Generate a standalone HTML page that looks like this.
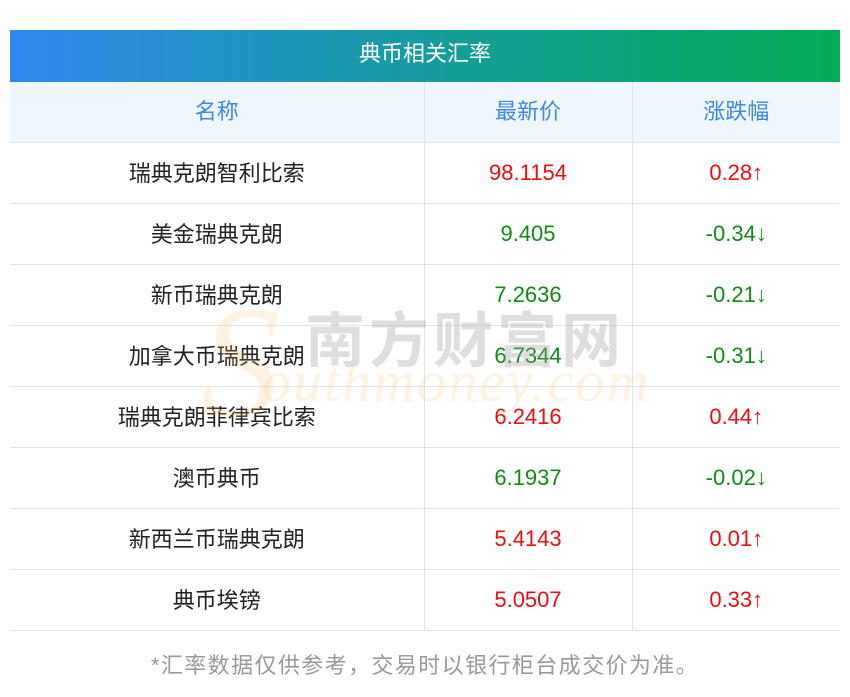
<!DOCTYPE html>
<html><head><meta charset="utf-8"><style>
body{margin:0;width:850px;height:697px;background:#fff;font-family:"Liberation Sans","Noto Sans CJK SC",sans-serif;position:relative;overflow:hidden}
.hd{position:absolute;left:10px;top:30px;width:830px;height:52px;background:linear-gradient(90deg,#2f88ef,#149e98 55%,#04ad55);color:#fff;font-size:22px;text-align:center;line-height:48px}
table{position:absolute;left:10px;top:82px;width:830px;border-collapse:collapse;table-layout:fixed}
td{border:1px solid #dfe3ec;height:61px;text-align:center;font-size:22px;padding:0 0 2px;color:#222;box-sizing:border-box;vertical-align:middle}
tr.h td{height:60px;background:#f0f6fe;color:#3a8ae4;padding-bottom:4px}
tr:first-child td{border-top:none}
td:first-child{border-left:none}td:last-child{border-right:none}
.r,.g{padding-bottom:0}
.r{color:#f20c0c}.g{color:#118a17}
.ft{position:absolute;left:0;width:850px;top:648px;text-align:center;color:#999;font-size:22px;letter-spacing:1.4px}
.wm1{position:absolute;left:305px;top:293px;font-size:60px;color:rgba(160,160,160,.35);letter-spacing:4px;font-family:"Noto Sans CJK SC",sans-serif;font-weight:bold;white-space:nowrap}
.wm2{position:absolute;left:262px;top:348px;font-size:58px;color:rgba(250,200,120,.22);font-style:italic;font-family:"Liberation Serif",serif;letter-spacing:2px;white-space:nowrap}
.wm3{position:absolute;left:200px;top:270px;font-size:160px;color:rgba(250,190,100,.18);font-style:italic;font-family:"Liberation Serif",serif}
</style></head><body>
<div class="hd">典币相关汇率</div>
<table>
<colgroup><col style="width:414px"><col style="width:208px"><col style="width:208px"></colgroup>
<tr class="h"><td>名称</td><td>最新价</td><td>涨跌幅</td></tr>
<tr><td>瑞典克朗智利比索</td><td class="r">98.1154</td><td class="r">0.28↑</td></tr>
<tr><td>美金瑞典克朗</td><td class="g">9.405</td><td class="g">-0.34↓</td></tr>
<tr><td>新币瑞典克朗</td><td class="g">7.2636</td><td class="g">-0.21↓</td></tr>
<tr><td>加拿大币瑞典克朗</td><td class="g">6.7344</td><td class="g">-0.31↓</td></tr>
<tr><td>瑞典克朗菲律宾比索</td><td class="r">6.2416</td><td class="r">0.44↑</td></tr>
<tr><td>澳币典币</td><td class="g">6.1937</td><td class="g">-0.02↓</td></tr>
<tr><td>新西兰币瑞典克朗</td><td class="r">5.4143</td><td class="r">0.01↑</td></tr>
<tr><td>典币埃镑</td><td class="r">5.0507</td><td class="r">0.33↑</td></tr>
</table>
<div class="wm3">S</div>
<div class="wm1">南方财富网</div>
<div class="wm2">outhmoney.com</div>
<div class="ft">*汇率数据仅供参考，交易时以银行柜台成交价为准。</div>
</body></html>
